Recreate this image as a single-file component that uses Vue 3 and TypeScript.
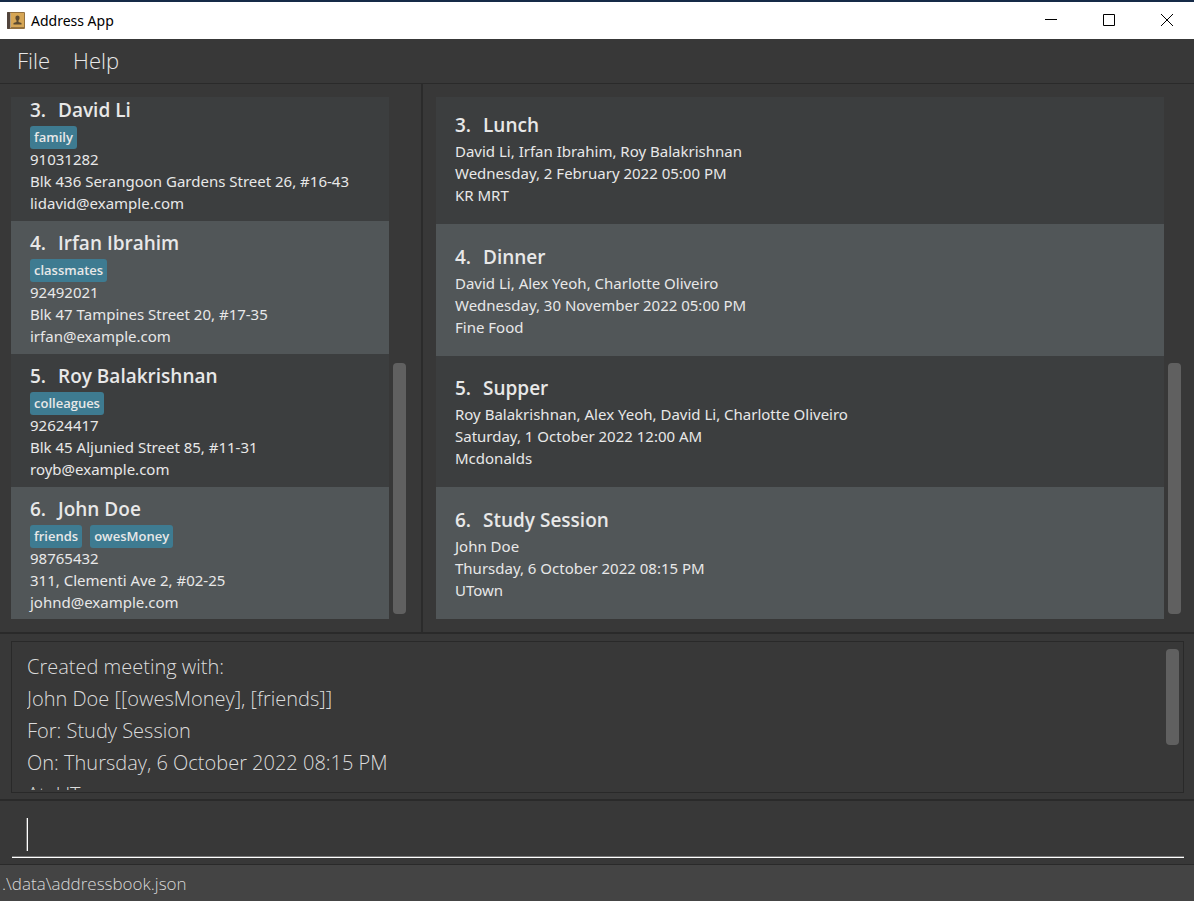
<script setup lang="ts">
import { ref } from 'vue'

interface Person {
  id: number
  name: string
  tags: string[]
  phone: string
  address: string
  email: string
}

interface Meeting {
  id: number
  title: string
  people: string
  date: string
  place: string
}

const persons: Person[] = [
  { id: 3, name: 'David Li', tags: ['family'], phone: '91031282', address: 'Blk 436 Serangoon Gardens Street 26, #16-43', email: 'lidavid@example.com' },
  { id: 4, name: 'Irfan Ibrahim', tags: ['classmates'], phone: '92492021', address: 'Blk 47 Tampines Street 20, #17-35', email: 'irfan@example.com' },
  { id: 5, name: 'Roy Balakrishnan', tags: ['colleagues'], phone: '92624417', address: 'Blk 45 Aljunied Street 85, #11-31', email: 'royb@example.com' },
  { id: 6, name: 'John Doe', tags: ['friends', 'owesMoney'], phone: '98765432', address: '311, Clementi Ave 2, #02-25', email: 'johnd@example.com' },
]

const meetings: Meeting[] = [
  { id: 3, title: 'Lunch', people: 'David Li, Irfan Ibrahim, Roy Balakrishnan', date: 'Wednesday, 2 February 2022 05:00 PM', place: 'KR MRT' },
  { id: 4, title: 'Dinner', people: 'David Li, Alex Yeoh, Charlotte Oliveiro', date: 'Wednesday, 30 November 2022 05:00 PM', place: 'Fine Food' },
  { id: 5, title: 'Supper', people: 'Roy Balakrishnan, Alex Yeoh, David Li, Charlotte Oliveiro', date: 'Saturday, 1 October 2022 12:00 AM', place: 'Mcdonalds' },
  { id: 6, title: 'Study Session', people: 'John Doe', date: 'Thursday, 6 October 2022 08:15 PM', place: 'UTown' },
]

const result = ref(
  [
    'Created meeting with:',
    'John Doe [[owesMoney], [friends]]',
    'For: Study Session',
    'On: Thursday, 6 October 2022 08:15 PM',
    'At: UTown',
  ].join('\n'),
)
const command = ref('')
</script>

<template>
  <div class="window">
    <header class="titlebar">
      <svg class="app-icon" viewBox="0 0 18 17" aria-hidden="true">
        <rect x="0" y="0" width="18" height="17" rx="1" fill="#94713f" />
        <rect x="0" y="0" width="3" height="17" rx="1" fill="#51443c" />
        <rect x="3" y="1" width="1" height="15" fill="#b3a084" />
        <rect x="4" y="1" width="13" height="14" fill="#d6a655" />
        <path d="M8.500 5Q8.500 3.500 10.500 3.500T12.500 5V7L11.500 8.500V10L14.500 11V12.500H6.500V11L9.500 10V8.500L8.500 7Z" fill="#5c4a30" />
      </svg>
      <span class="app-title">Address App</span>
      <div class="controls">
        <button type="button" aria-label="Minimize">
          <svg viewBox="0 0 12 12"><path d="M0 5.500H12" /></svg>
        </button>
        <button type="button" aria-label="Maximize">
          <svg viewBox="0 0 12 12"><path d="M.5 .5H11.500V11.500H.5Z" /></svg>
        </button>
        <button type="button" aria-label="Close">
          <svg viewBox="0 0 12 12"><path d="M0 0L12 12M12 0L0 12" /></svg>
        </button>
      </div>
    </header>

    <nav class="menubar">
      <button type="button">File</button>
      <button type="button">Help</button>
    </nav>

    <main class="split">
      <section class="pane" aria-label="Persons">
        <ul class="list persons">
          <li v-for="p in persons" :key="p.id" class="card">
            <h2><span class="num">{{ p.id }}.</span>{{ p.name }}</h2>
            <div class="tags">
              <span v-for="t in p.tags" :key="t" class="tag">{{ t }}</span>
            </div>
            <p>{{ p.phone }}</p>
            <p>{{ p.address }}</p>
            <p>{{ p.email }}</p>
          </li>
        </ul>
        <div class="track"><div class="thumb"></div></div>
      </section>
      <div class="divider"></div>
      <section class="pane pane-right" aria-label="Meetings">
        <ul class="list meetings">
          <li v-for="m in meetings" :key="m.id" class="card">
            <h2><span class="num">{{ m.id }}.</span>{{ m.title }}</h2>
            <p>{{ m.people }}</p>
            <p>{{ m.date }}</p>
            <p>{{ m.place }}</p>
          </li>
        </ul>
        <div class="track"><div class="thumb"></div></div>
      </section>
    </main>

    <section class="result">
      <div class="result-box">
        <textarea v-model="result" readonly aria-label="Result"></textarea>
        <div class="result-thumb"></div>
      </div>
    </section>

    <section class="command">
      <div class="command-line">
        <span class="caret"></span>
        <input v-model="command" type="text" aria-label="Command" />
      </div>
    </section>

    <footer class="status">.\data\addressbook.json</footer>
  </div>
</template>

<style>
body {
  margin: 0;
  background: #383838;
}
</style>

<style scoped>
.window {
  display: flex;
  flex-direction: column;
  height: 100vh;
  min-height: 700px;
  overflow: hidden;
  background: #383838;
  color: #e8e8e8;
  font-family: "Open Sans", "Noto Sans", sans-serif;
}
.window * {
  box-sizing: border-box;
}
button,
input,
textarea {
  margin: 0;
  padding: 0;
  border: 0;
  background: transparent;
  color: inherit;
  font: inherit;
  outline: none;
}
.titlebar {
  flex: none;
  display: flex;
  align-items: center;
  height: 39px;
  padding-left: 7px;
  border-top: 2px solid #152a47;
  background: #fff;
  color: #000;
}
.app-icon {
  width: 18px;
  height: 17px;
}
.app-title {
  margin-left: 6px;
  font-family: "Noto Sans", "Open Sans", sans-serif;
  font-size: 14px;
}
.controls {
  display: flex;
  gap: 4px;
  height: 100%;
  margin-left: auto;
}
.controls button {
  display: flex;
  align-items: center;
  justify-content: center;
  width: 54px;
  padding-bottom: 1px;
}
.controls svg {
  width: 12px;
  height: 12px;
  fill: none;
  stroke: #000;
  stroke-width: 1;
}
.menubar {
  flex: none;
  display: flex;
  align-items: flex-start;
  gap: 23px;
  height: 45px;
  padding: 0 17px;
  border-bottom: 1px solid #2a2a2a;
}
.menubar button {
  font-size: 22px;
  font-weight: 300;
  line-height: 42px;
}
.split {
  flex: 1;
  display: grid;
  grid-template-columns: 421fr 2px 771fr;
  min-height: 0;
}
.divider {
  background: #2b2b2b;
}
.pane {
  display: flex;
  min-width: 0;
  min-height: 0;
  padding: 13px 11px;
}
.pane-right {
  padding: 13px 9px 13px 13px;
}
.list {
  flex: 1;
  display: flex;
  flex-direction: column;
  justify-content: flex-end;
  min-width: 0;
  margin: 0;
  padding: 0;
  overflow: hidden;
  list-style: none;
}
.card {
  flex: none;
  padding-left: 19px;
  background: #3c3e3f;
}
.card:nth-child(even) {
  background: #515658;
}
.persons .card {
  height: 133px;
  padding-top: 9px;
}
.persons .card:last-child {
  height: 132px;
}
.meetings .card {
  height: 132px;
  padding-top: 20px;
}
.meetings .card:nth-child(3) {
  height: 131px;
  padding-top: 19px;
}
.card h2 {
  margin: 0;
  font-size: 19px;
  font-weight: 600;
  line-height: 26px;
}
.meetings h2 {
  margin-bottom: 2px;
}
.num {
  display: inline-block;
  width: 28px;
}
.card p {
  margin: 0;
  font-family: "Noto Sans", "Open Sans", sans-serif;
  font-size: 15px;
  line-height: 22px;
  white-space: nowrap;
}
.tags {
  display: flex;
  gap: 8px;
  height: 25px;
  padding-top: 3px;
}
.tag {
  height: 23px;
  padding: 0 4px;
  border-radius: 3px;
  background: #3e7b91;
  font-size: 13px;
  font-weight: 600;
  line-height: 23px;
}
.track {
  display: flex;
  flex: none;
  align-items: flex-end;
  width: 21px;
  padding: 4px 4px 5px;
}
.thumb {
  width: 13px;
  height: 49%;
  border-radius: 4px;
  background: #606060;
}
.result {
  flex: none;
  padding: 7px 10px 6px 11px;
  border-top: 2px solid #2a2a2a;
  border-bottom: 2px solid #2a2a2a;
}
.result-box {
  display: flex;
  align-items: flex-start;
  gap: 8px;
  height: 152px;
  padding: 7px 4px 2px 15px;
  border: 1px solid #292929;
}
textarea {
  flex: 1;
  height: 100%;
  overflow: hidden;
  padding-top: 2px;
  color: #dcdcdc;
  font-size: 20px;
  font-weight: 300;
  line-height: 32px;
  resize: none;
}
.result-thumb {
  width: 13px;
  height: 96px;
  border-radius: 4px;
  background: #606060;
}
.command {
  flex: none;
  padding: 10px 10px 6px 12px;
}
.command-line {
  display: flex;
  align-items: center;
  height: 47px;
  padding-left: 14px;
  border-bottom: 1px solid #fff;
  box-shadow: inset 0 -1px #777;
}
.caret {
  width: 2px;
  height: 33px;
  border-left: 1px solid #777;
  background: #fff;
}
.command input {
  flex: 1;
  height: 33px;
  caret-color: transparent;
  font-size: 20px;
  font-weight: 300;
}
.status {
  flex: none;
  height: 37px;
  padding-left: 2px;
  border-top: 1px solid #2a2a2a;
  background: #444;
  color: #d8d8d8;
  font-size: 17px;
  font-weight: 300;
  line-height: 37px;
}
</style>
